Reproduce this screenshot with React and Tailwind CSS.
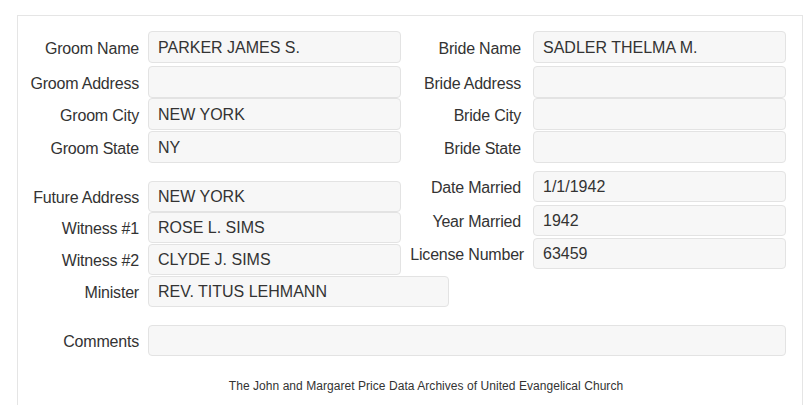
const fieldBox =
  'h-[31px] rounded-[4px] border border-[#e3e3e3] bg-[#f7f7f7] px-[9px] pt-[1px] flex items-center text-[16px] text-[#333]';

function Field({ label, value, labelW = 'w-[130px] pr-[9px]', inputW = 'w-[253px]', className = '' }) {
  return (
    <div className={`flex items-center ${className}`}>
      <div className={`${labelW} shrink-0 pt-[3px] text-right text-[16px] tracking-[-0.2px] text-[#333] whitespace-nowrap`}>
        {label}
      </div>
      <div className={`${fieldBox} ${inputW}`}>{value}</div>
    </div>
  );
}

const rightLabel = 'w-[132px] pr-[12px]';

export default function App() {
  const top = [
    ['Groom Name', 'PARKER JAMES S.', 'Bride Name', 'SADLER THELMA M.', 'mt-0'],
    ['Groom Address', '', 'Bride Address', '', 'mt-[3px]'],
    ['Groom City', 'NEW YORK', 'Bride City', '', 'mt-0'],
    ['Groom State', 'NY', 'Bride State', '', 'mt-[1px]'],
  ];

  return (
    <div className="w-[805px] h-[405px] overflow-hidden bg-white" style={{ fontFamily: '"Liberation Sans", Arial, sans-serif' }}>
      <div className="ml-[17px] mt-[15px] w-[786px] h-[420px] border border-[#e5e5e5] pt-[15px]">

        {top.map(([gl, gv, bl, bv, mt], i) => (
          <div key={i} className={`flex ${mt}`}>
            <Field label={gl} value={gv} className="[&>div:last-child]:h-[32px]" />
            <Field label={bl} value={bv} labelW={rightLabel} className="[&>div:last-child]:h-[32px]" />
          </div>
        ))}

        <div className="flex">
          <div className="flex flex-col mt-[18px]">
            <Field label="Future Address" value="NEW YORK" />
            <Field label="Witness #1" value="ROSE L. SIMS" />
            <Field label="Witness #2" value="CLYDE J. SIMS" className="mt-[1px]" />
          </div>
          <div className="flex flex-col mt-[8px]">
            <Field label="Date Married" value="1/1/1942" labelW={rightLabel} />
            <Field label="Year Married" value="1942" labelW={rightLabel} className="mt-[3px]" />
            <Field label="License Number" value="63459" labelW="w-[132px] pr-[9px]" className="mt-[2px]" />
          </div>
        </div>

        <Field label="Minister" value="REV. TITUS LEHMANN" inputW="w-[301px]" className="mt-[1px]" />

        <Field label="Comments" value="" inputW="w-[638px]" className="mt-[18px]" />

        <div className="mt-[21px] pl-[32px] text-center text-[12px] tracking-[0.05px] text-[#333]">
          The John and Margaret Price Data Archives of United Evangelical Church
        </div>
      </div>
    </div>
  );
}
